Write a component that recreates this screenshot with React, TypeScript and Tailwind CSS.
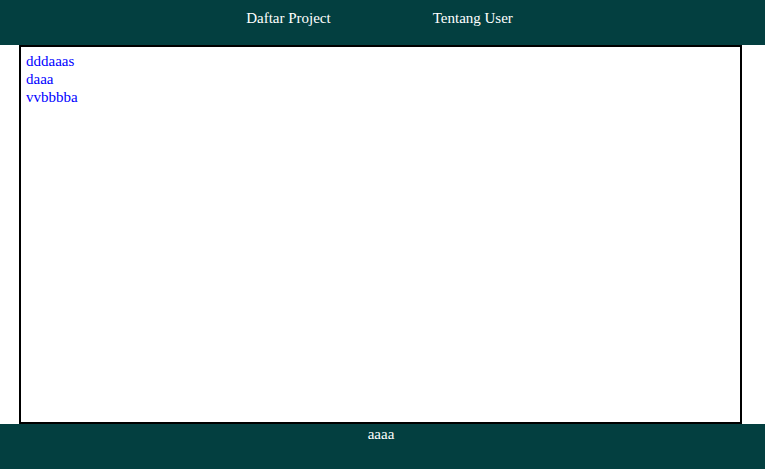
export default function App() {
  // Mock data, same as the screenshot
  const projects = ["dddaaas", "daaa", "vvbbbba"];

  return (
    <div className="h-[469px] flex flex-col bg-white font-['Liberation_Serif',serif] text-[15px] leading-[18px]">

      {/* Nav */}
      <header className="h-[45px] shrink-0 bg-[#033f40] text-white flex justify-center gap-[102px] pt-[9px] pr-[6px]">
        <a className="cursor-pointer">Daftar Project</a>
        <a className="cursor-pointer">Tentang User</a>
      </header>

      {/* Project list */}
      <main className="h-[379px] shrink-0 ml-[19px] w-[723px] border-2 border-black pt-[5px] pl-[5px]">
        {projects.map((p, i) => (
          <div key={i} className="text-[#0000ff]">{p}</div>
        ))}
      </main>

      {/* Footer */}
      <footer className="h-[45px] shrink-0 bg-[#033f40] text-white text-center pt-[1px] pr-[3px]">
        aaaa
      </footer>
    </div>
  );
}
